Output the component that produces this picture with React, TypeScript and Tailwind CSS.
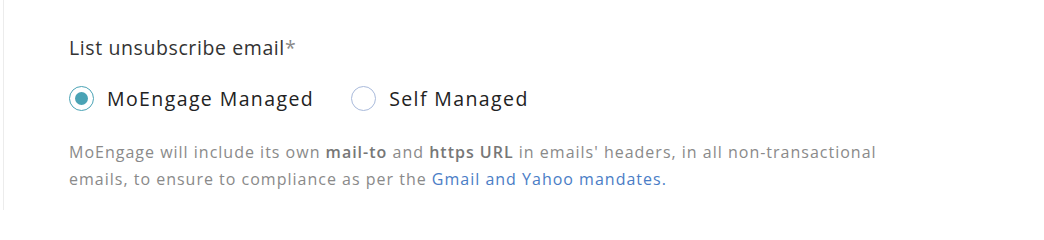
const App = () => {
  return (
    <div className="w-[1044px] h-[210px] bg-white" style={{ fontFamily: "'Open Sans', sans-serif" }}>
      <div className="h-full ml-[3px] border-l border-[#ececec] pl-[65px] pt-[34px]">
        <p className="text-[19.5px] leading-[28px] tracking-[0.6px] text-[#333]">
          List unsubscribe email<span className="text-[#888]">*</span>
        </p>

        <div className="mt-[22px] flex items-center gap-[37px]">
          <label className="flex items-center gap-[13px] cursor-pointer">
            <span className="w-[25px] h-[25px] rounded-full border-[1.5px] border-[#4aa3b5] flex items-center justify-center">
              <span className="w-[13px] h-[13px] rounded-full bg-[#4aa3b5]"></span>
            </span>
            <span className="text-[19.5px] tracking-[1.4px] text-[#222]">MoEngage Managed</span>
          </label>
          <label className="flex items-center gap-[13px] cursor-pointer">
            <span className="w-[25px] h-[25px] rounded-full border-[1.5px] border-[#a9badb]"></span>
            <span className="text-[19.5px] tracking-[1.4px] text-[#222]">Self Managed</span>
          </label>
        </div>

        <p className="mt-[26px] w-[830px] text-[16px] leading-[27px] tracking-[1px] text-[#8a8a8a]">
          MoEngage will include its own <b className="font-semibold text-[#777]">mail-to</b> and{" "}
          <b className="font-semibold text-[#777]">https URL</b> in emails' headers, in all non-transactional emails, to
          ensure to compliance as per the{" "}
          <a href="#" className="text-[#4a7dc6]">
            Gmail and Yahoo mandates.
          </a>
        </p>
      </div>
    </div>
  );
};

export default App;
